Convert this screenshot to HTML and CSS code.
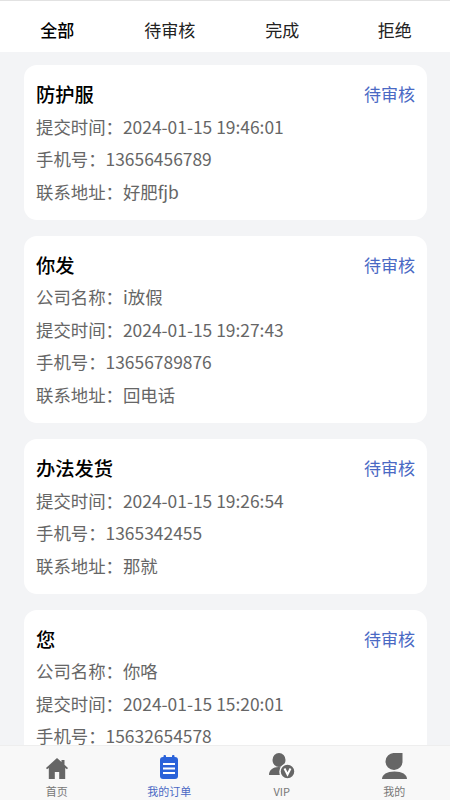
FILE: index.html
```html
<!DOCTYPE html>
<html lang="zh">
<head>
  <meta charset="UTF-8">
  <meta name="viewport" content="width=device-width, initial-scale=1.0">
  <title>我的订单</title>
  <link rel="stylesheet" href="styles.css">
</head>
<body>
  <div class="page">
    <nav class="tabs">
      <span class="tab active">全部</span>
      <span class="tab">待审核</span>
      <span class="tab">完成</span>
      <span class="tab">拒绝</span>
    </nav>

    <main class="list">
      <section class="card">
        <div class="card_head"><h2>防护服</h2><span class="status">待审核</span></div>
        <p>提交时间：2024-01-15 19:46:01</p>
        <p>手机号：13656456789</p>
        <p>联系地址：好肥fjb</p>
      </section>
      <section class="card">
        <div class="card_head"><h2>你发</h2><span class="status">待审核</span></div>
        <p>公司名称：i放假</p>
        <p>提交时间：2024-01-15 19:27:43</p>
        <p>手机号：13656789876</p>
        <p>联系地址：回电话</p>
      </section>
      <section class="card">
        <div class="card_head"><h2>办法发货</h2><span class="status">待审核</span></div>
        <p>提交时间：2024-01-15 19:26:54</p>
        <p>手机号：1365342455</p>
        <p>联系地址：那就</p>
      </section>
      <section class="card">
        <div class="card_head"><h2>您</h2><span class="status">待审核</span></div>
        <p>公司名称：你咯</p>
        <p>提交时间：2024-01-15 15:20:01</p>
        <p>手机号：15632654578</p>
      </section>
    </main>

    <footer class="bar">
      <a class="bar_item">
        <svg width="22" height="21" viewBox="0 0 22 21"><path fill="#666" d="M11 0 0 10l1 1.300 1.800-1.300v11h6v-7h4.400v7h6V10l1.800 1.300L22 10l-3.500-3.200V2h-3v2.100z"/></svg>
        <span>首页</span>
      </a>
      <a class="bar_item current">
        <svg width="18" height="24" viewBox="0 0 18 24"><rect x="0" y="2" width="18" height="22" rx="3" fill="#2a62d9"/><rect x="3.500" y="0" width="2.500" height="4" rx="1" fill="#2a62d9"/><rect x="12" y="0" width="2.500" height="4" rx="1" fill="#2a62d9"/><rect x="3" y="8" width="12" height="2" fill="#fff"/><rect x="3" y="12.500" width="12" height="2" fill="#fff"/><rect x="3" y="17" width="12" height="2" fill="#fff"/></svg>
        <span>我的订单</span>
      </a>
      <a class="bar_item">
        <svg width="26" height="26" viewBox="0 0 26 26"><ellipse cx="10" cy="7" rx="6.500" ry="7" fill="#666"/><path fill="#666" d="M0 22c0-5 4-8 9.500-8 1.800 0 3.300.3 4.600.9-2.600 1.500-3.900 4.100-3.200 7.100z"/><circle cx="18.500" cy="18.500" r="7.500" fill="#666" stroke="#f8f8f8" stroke-width="1.500"/><path fill="none" stroke="#fff" stroke-width="2" d="m15.500 15.500 3 6 3-6"/></svg>
        <span>VIP</span>
      </a>
      <a class="bar_item">
        <svg width="25" height="26" viewBox="0 0 25 26"><path fill="#666" d="M12.500 0H20.500v8a8.500 8.500 0 1 1-8-8z"/><path fill="#666" d="M0 26c0-4.500 5-7.500 12.500-7.500S25 21.500 25 26z"/></svg>
        <span>我的</span>
      </a>
    </footer>
  </div>
</body>
</html>
```

FILE: styles.css
```css
* {margin: 0;padding: 0;box-sizing: border-box;}
body {font-family: "Noto Sans CJK SC", "Noto Sans", sans-serif;background-color: #f3f4f6;}
.page {display: flex;flex-direction: column;height: 800px;overflow: hidden;}

.tabs {display: grid;grid-template-columns: repeat(4, 1fr);flex: none;height: 52px;padding-top: 6px;justify-items: center;align-items: center;background-color: #fff;border-top: 1px solid #e2e2e2;}
.tab {font-size: 17px;line-height: 24px;color: #222;position: relative;left: 1px;}
.tab.active {color: #000;font-weight: 500;}

.list {flex: 1;min-height: 0;overflow: hidden;padding: 13px 23px 0 24px;display: flex;flex-direction: column;gap: 16.300px;}
.card {flex: none;background-color: #fff;border-radius: 13px;padding: 12px 12px 11.500px;}
.card_head {display: flex;justify-content: space-between;align-items: center;height: 33.500px;}
.card h2 {font-size: 19.300px;font-weight: 500;color: #000;}
.status {font-size: 17px;color: #4a69c4;}
.card p {font-size: 17.400px;line-height: 32.500px;color: #666;}

.bar {flex: none;display: flex;height: 55px;background-color: #f8f8f8;border-top: 1px solid #eee;}
.bar_item {flex: 1;display: flex;flex-direction: column;align-items: center;justify-content: flex-end;gap: 5px;padding: 0 0 1px 1px;font-size: 11px;line-height: 15px;color: #777;}
.bar_item.current {color: #4a69c4;}
```
